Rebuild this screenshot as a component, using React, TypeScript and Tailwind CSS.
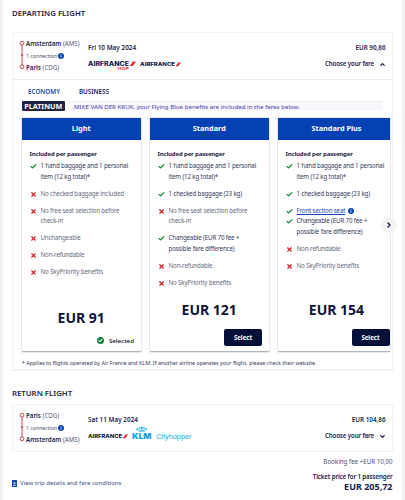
import type { ReactNode } from 'react';
import { Check, ChevronDown, ChevronRight, ChevronUp, X } from 'lucide-react';

interface Benefit {
  lines: string[];
  status: 'included' | 'excluded';
  link?: boolean;
}

interface Fare {
  name: string;
  price: string;
  selected?: boolean;
  benefits: Benefit[];
}

const baggage: Benefit = { lines: ['1 hand baggage and 1 personal', 'item (12 kg total)*'], status: 'included' };
const checked: Benefit = { lines: ['1 checked baggage (23 kg)'], status: 'included' };
const noSeat: Benefit = { lines: ['No free seat selection before', 'check-in'], status: 'excluded' };
const changeable: Benefit = { lines: ['Changeable (EUR 70 fee +', 'possible fare difference)'], status: 'included' };
const nonRefundable: Benefit = { lines: ['Non-refundable'], status: 'excluded' };
const noPriority: Benefit = { lines: ['No SkyPriority benefits'], status: 'excluded' };

const fares: Fare[] = [
  {
    name: 'Light',
    price: 'EUR 91',
    selected: true,
    benefits: [
      baggage,
      { lines: ['No checked baggage included'], status: 'excluded' },
      noSeat,
      { lines: ['Unchangeable'], status: 'excluded' },
      nonRefundable,
      noPriority,
    ],
  },
  {
    name: 'Standard',
    price: 'EUR 121',
    benefits: [baggage, checked, noSeat, changeable, nonRefundable, noPriority],
  },
  {
    name: 'Standard Plus',
    price: 'EUR 154',
    benefits: [
      baggage,
      checked,
      { lines: ['Front section seat'], status: 'included', link: true },
      changeable,
      nonRefundable,
      noPriority,
    ],
  },
];

const InfoIcon = () => (
  <svg viewBox="0 0 12 12" className="size-[6px] shrink-0">
    <circle cx="6" cy="6" r="6" fill="#0b45b0" />
    <path d="M6 5v4M6 2.5v1.3" stroke="#fff" strokeWidth="1.6" />
  </svg>
);

const AirFranceLogo = ({ hop, className }: { hop?: boolean; className: string }) => (
  <svg viewBox="0 0 96 20" className={className}>
    <text x="0" y="10" fontFamily="Inter, sans-serif" fontWeight="800" fontSize="11.5" textLength="82" lengthAdjust="spacingAndGlyphs" fill="#101c44">
      AIRFRANCE
    </text>
    <path d="M83.5 10 90 1h6l-6.500 9z" fill="#e0242c" />
    {hop && (
      <text x="59" y="18.5" fontFamily="Inter, sans-serif" fontWeight="600" fontSize="8" textLength="23" lengthAdjust="spacingAndGlyphs" fill="#e0242c">
        HOP
      </text>
    )}
  </svg>
);

const KlmLogo = () => (
  <svg viewBox="0 0 120 30" className="mt-[1px] ml-[3.5px] h-[15px] w-[60px] shrink-0">
    <g fill="#1ba4de">
      <circle cx="10.5" cy="6.5" r="1.8" />
      <circle cx="15" cy="4.5" r="1.8" />
      <circle cx="19.5" cy="3.5" r="1.8" />
      <circle cx="24" cy="4.5" r="1.8" />
      <circle cx="28.5" cy="6.5" r="1.8" />
      <path d="M13 8.5h13V11H13zM18.7 1h1.6v7h-1.6z" />
      <text x="0" y="26" fontFamily="Inter, sans-serif" fontWeight="900" fontSize="16" textLength="39" lengthAdjust="spacingAndGlyphs">
        KLM
      </text>
      <text x="48" y="26" fontFamily="'Liberation Sans', sans-serif" fontSize="14.5" textLength="71" lengthAdjust="spacingAndGlyphs">
        Cityhopper
      </text>
    </g>
  </svg>
);

interface FlightHeaderProps {
  from: [string, string];
  to: [string, string];
  date: string;
  price: string;
  open?: boolean;
  logos: ReactNode;
}

const FlightHeader = ({ from, to, date, price, open, logos }: FlightHeaderProps) => (
  <div className="flex h-[46px] pr-[6px] pl-[6px]">
    <svg viewBox="0 0 6 30" className="mt-[7px] h-[30px] w-[6px]" fill="none" stroke="#c4343e">
      <path d="M3 5v20" strokeWidth=".9" />
      <circle cx="3" cy="3.2" r="1.9" strokeWidth=".9" fill="#fff" />
      <circle cx="3" cy="15.2" r=".7" fill="#c4343e" strokeWidth=".6" />
      <circle cx="3" cy="26.8" r="1.9" strokeWidth=".9" fill="#fff" />
    </svg>
    <div className="ml-[1px] w-[62px] pt-[4.5px] leading-[12px]">
      <p className="text-[6.2px]">
        <b className="font-semibold">{from[0]}</b> <span className="text-[#555b75]">{from[1]}</span>
      </p>
      <p className="flex items-center gap-[1px] text-[5.2px] text-[#444b6a]">
        1 connection <InfoIcon />
      </p>
      <p className="text-[6.2px]">
        <b className="font-semibold">{to[0]}</b> <span className="text-[#555b75]">{to[1]}</span>
      </p>
    </div>
    <div className="pt-[8.5px]">
      <p className="text-[6.4px] leading-[11px] font-semibold">{date}</p>
      <div className="flex h-[13px] items-start">{logos}</div>
    </div>
    <div className="ml-auto flex flex-col items-end pt-[9px] font-semibold">
      <p className="text-[6.3px] leading-[11px]">{price}</p>
      <p className="mt-[6px] flex items-center gap-[4.5px] text-[6.2px] leading-[10px] tracking-[-0.14px]">
        Choose your fare
        {open ? <ChevronUp className="size-[7px]" strokeWidth={4.5} /> : <ChevronDown className="size-[7px]" strokeWidth={4.5} />}
      </p>
    </div>
  </div>
);

const BenefitRow = ({ benefit }: { benefit: Benefit }) => {
  const included = benefit.status === 'included';
  return (
    <li className={`flex ${benefit.link ? '' : 'mb-[6.2px]'} ${included ? 'text-[#343b5c]' : 'text-[#666b80]'}`}>
      <span className="flex h-[10.7px] w-[11px] shrink-0 items-center">
        {included ? (
          <Check className="size-[7px] text-[#16803a]" strokeWidth={4} />
        ) : (
          <X className="size-[7px] text-[#d0202c]" strokeWidth={4} />
        )}
      </span>
      <div className="whitespace-nowrap">
        {benefit.link ? (
          <p className="flex items-center gap-[3px] text-[#1b48b4]">
            <span className="underline">{benefit.lines[0]}</span>
            <InfoIcon />
          </p>
        ) : (
          benefit.lines.map((line) => <p key={line}>{line}</p>)
        )}
      </div>
    </li>
  );
};

const FareCard = ({ fare, last }: { fare: Fare; last: boolean }) => (
  <div
    className={`flex h-[234px] shrink-0 flex-col border-b border-[#b4b4b8] bg-white shadow-[0_0_1.5px_rgba(0,0,0,0.35)] ${
      last ? 'w-[112px]' : 'w-[118.5px]'
    }`}
  >
    <h3 className={`h-[22px] bg-[#0442b4] text-center text-[7.3px] leading-[21.5px] font-bold text-white ${last ? 'pl-[5px]' : ''}`}>
      {fare.name}
    </h3>
    <div className="h-[158px] pt-[9px] pl-[7.5px]">
      <p className="text-[6px] leading-[10px] font-bold tracking-[-0.14px]">Included per passenger</p>
      <ul className="mt-[2.3px] text-[6.2px] leading-[10.7px] tracking-[-0.16px]">
        {fare.benefits.map((benefit) => (
          <BenefitRow key={benefit.lines[0]} benefit={benefit} />
        ))}
      </ul>
    </div>
    <p className={`text-center text-[14px] leading-[18px] font-bold text-[#0b1440] ${fare.selected ? 'pt-[11px]' : 'pt-[3px]'} ${last ? 'pl-[5px]' : ''}`}>
      {fare.price}
    </p>
    {fare.selected ? (
      <div className="mt-auto mr-[6.5px] mb-[5px] flex items-center justify-end gap-[5px] text-[6.1px] leading-[11px] font-semibold">
        <span className="flex size-[7px] items-center justify-center rounded-full bg-[#15803d]">
          <Check className="size-[5px] text-white" strokeWidth={5} />
        </span>
        Selected
      </div>
    ) : (
      <button
        className={`mt-auto mb-[5px] h-[17px] w-[38px] self-end rounded-[2px] bg-[#051039] text-[6.1px] font-bold text-white ${
          last ? 'mr-[0.5px]' : 'mr-[6.5px]'
        }`}
      >
        Select
      </button>
    )}
  </div>
);

export default function App() {
  return (
    <div className="h-[500px] w-[405px] overflow-hidden border-r-[3px] border-l-[3px] border-[#f2f2f3] bg-white pr-[9.5px] pl-[9px] font-['Noto_Sans',sans-serif] text-[#1b2347]">
      <h2 className="pt-[6.5px] text-[7.8px] leading-[12px] font-semibold">DEPARTING FLIGHT</h2>

      <section className="relative mt-[13.5px] h-[339px] border border-b-2 border-[#f2f2f4]">
        <FlightHeader
          from={['Amsterdam', '(AMS)']}
          to={['Paris', '(CDG)']}
          date="Fri 10 May 2024"
          price="EUR 90,86"
          open
          logos={
            <>
              <AirFranceLogo hop className="mt-[8px] h-[10px] w-[48px]" />
              <AirFranceLogo className="mt-[9.5px] ml-[4px] h-[8.5px] w-[41px]" />
            </>
          }
        />
        <div className="border-t border-[#ececee]">
          <nav className="flex h-[21px] gap-[19px] pt-[6px] pl-[15px] text-[6.3px] leading-[11px] font-semibold">
            <span className="text-[#204aa8]">ECONOMY</span>
            <span>BUSINESS</span>
          </nav>
          <div className="ml-[8.5px] flex h-[10px]">
            <span className="h-[10px] w-[43.5px] rounded-[1px] bg-[#1c2744] text-center text-[7.2px] leading-[10px] font-bold text-white">
              PLATINUM
            </span>
            <p className="ml-[6px] w-[312px] border-t border-[#e9e9ee] bg-[#f7f7fc] pl-[3px] text-[6.17px] leading-[9px] whitespace-nowrap text-[#4a3aa8]">
              MIKE VAN DER KRUK, your Flying Blue benefits are included in the fares below.
            </p>
          </div>
          <div className="mt-[7px] ml-[9px] flex gap-[9.5px]">
            {fares.map((fare, i) => (
              <FareCard key={fare.name} fare={fare} last={i === fares.length - 1} />
            ))}
          </div>
          <p className="mt-[5.5px] ml-[9px] text-[5.37px] leading-[10px] whitespace-nowrap text-[#30375a]">
            * Applies to flights operated by Air France and KLM. If another airline operates your flight, please check their website.
          </p>
        </div>
        <button className="absolute top-[183.5px] right-[-5px] flex size-[16px] items-center justify-center rounded-full bg-[#f4f4f5]">
          <ChevronRight className="size-[8px] text-[#101c44]" strokeWidth={4} />
        </button>
      </section>

      <h2 className="mt-[15.5px] text-[7.8px] leading-[12px] font-semibold">RETURN FLIGHT</h2>

      <section className="mt-[5.5px] border border-[#f2f2f4]">
        <FlightHeader
          from={['Paris', '(CDG)']}
          to={['Amsterdam', '(AMS)']}
          date="Sat 11 May 2024"
          price="EUR 104,86"
          logos={
            <>
              <AirFranceLogo className="mt-[9.5px] h-[8.5px] w-[40px]" />
              <KlmLogo />
            </>
          }
        />
      </section>

      <footer className="flex justify-between">
        <a className="mt-[26px] flex items-center gap-[3px] self-start text-[6.05px] leading-[10px] text-[#3c4f86]">
          <svg viewBox="0 0 10 14" className="h-[7px] w-[5px]">
            <rect width="10" height="14" fill="#1747b3" />
            <path d="M2.5 6.5h5M5 4v5M2 11h6" stroke="#fff" strokeWidth="1.2" />
          </svg>
          View trip details and fare conditions
        </a>
        <div className="pt-[4.5px] text-right">
          <p className="text-[6.2px] leading-[10px] text-[#4c5270]">Booking fee +EUR 10,00</p>
          <p className="mt-[5.5px] text-[6.2px] leading-[10px] font-semibold tracking-[-0.13px]">Ticket price for 1 passenger</p>
          <p className="text-[9px] leading-[10px] font-bold">EUR 205,72</p>
        </div>
      </footer>
    </div>
  );
}
